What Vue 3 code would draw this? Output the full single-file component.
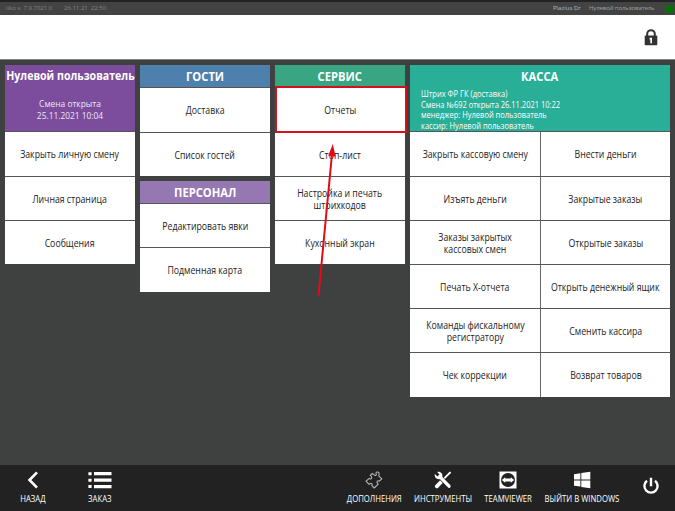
<script setup>
const personal = ['Закрыть личную смену', 'Личная страница', 'Сообщения']
const guests = ['Доставка', 'Список гостей']
const staff = ['Редактировать явки', 'Подменная карта']
const service = ['Отчеты', 'Стоп-лист', 'Настройка и печать\nштрихкодов', 'Кухонный экран']
const cash = [
  'Закрыть кассовую смену', 'Внести деньги',
  'Изъять деньги', 'Закрытые заказы',
  'Заказы закрытых\nкассовых смен', 'Открытые заказы',
  'Печать X-отчета', 'Открыть денежный ящик',
  'Команды фискальному\nрегистратору', 'Сменить кассира',
  'Чек коррекции', 'Возврат товаров',
]
const cashInfo = [
  'Штрих ФР ГК (доставка)',
  'Смена №692 открыта 26.11.2021 10:22',
  'менеджер: Нулевой пользователь',
  'кассир: Нулевой пользователь',
]
</script>

<template>
  <div class="screen">
    <header class="status">
      <span class="version">iiko v. 7.9.7021.0</span>
      <span class="clock">26.11.21&nbsp; 22:50</span>
      <span class="plugin">Plazius Dr</span>
      <span class="user">Нулевой пользователь</span>
      <i class="led"></i>
    </header>
    <div class="topbar">
      <svg class="lock" width="14" height="17" viewBox="0 0 14 17">
        <path d="M3.2 8V5a3.8 3.8 0 0 1 7.6 0v3" fill="none" stroke="#333" stroke-width="2" />
        <rect x=".7" y="6.6" width="12.6" height="9.6" rx=".8" fill="#333" />
        <path d="M5.6 8.8h2.4v5.4H6.3v-3.6h-.7z" fill="#fff" />
      </svg>
    </div>

    <main class="board">
      <section class="group">
        <div class="head tall purple">
          <h2 class="name"><span>Нулевой пользователь</span></h2>
          <p class="shift">Смена открыта<br>25.11.2021 10:04</p>
        </div>
        <button v-for="t in personal" :key="t" class="tile"><span>{{ t }}</span></button>
      </section>

      <div class="stack">
        <section class="group">
          <h2 class="head blue"><span>ГОСТИ</span></h2>
          <button v-for="t in guests" :key="t" class="tile"><span>{{ t }}</span></button>
        </section>
        <section class="group">
          <h2 class="head violet"><span>ПЕРСОНАЛ</span></h2>
          <button v-for="t in staff" :key="t" class="tile"><span>{{ t }}</span></button>
        </section>
      </div>

      <section class="group service">
        <h2 class="head green"><span>СЕРВИС</span></h2>
        <button v-for="t in service" :key="t" class="tile"><span>{{ t }}</span></button>
        <div class="highlight"></div>
        <svg class="arrow" width="24" height="156" viewBox="0 0 24 156">
          <path d="M3.5 151.5 17 10" stroke="#e30b17" stroke-width="2" fill="none" />
          <path d="M17.8 0 20.6 12.5 13.2 11.8Z" fill="#e30b17" />
        </svg>
      </section>

      <section class="group wide">
        <div class="head tall teal">
          <h2 class="title"><span>КАССА</span></h2>
          <div class="infos">
            <p v-for="l in cashInfo" :key="l">{{ l }}</p>
          </div>
        </div>
        <div class="pairs">
          <button v-for="t in cash" :key="t" class="tile"><span>{{ t }}</span></button>
        </div>
      </section>
    </main>

    <footer class="dock">
      <div class="cmd back">
        <svg width="18" height="18" viewBox="0 0 18 18"><path d="M13 1.3 5.5 9l7.5 7.7" fill="none" stroke="#fff" stroke-width="2.6" /></svg>
        <span>НАЗАД</span>
      </div>
      <div class="cmd order">
        <svg width="24" height="18" viewBox="0 0 24 18">
          <path d="M6 2.7h17.5M6 9.2h17.5M6 15.6h17.5" stroke="#fff" stroke-width="3.3" />
          <path d="M.4 2.7h3.2M.4 9.2h3.2M.4 15.6h3.2" stroke="#fff" stroke-width="3" />
        </svg>
        <span>ЗАКАЗ</span>
      </div>
      <div class="cmd addons">
        <svg width="18" height="18" viewBox="0 0 18 18">
          <path d="M1 10.2 4.2 7.3C5.5 9 7.8 7 6.2 5.2L5.2 4.3 7.3 2.3 9.5 4.2C11 5 11.8 3.7 11 2.6 10.7 1 13 .3 13.9 1.8 14.8 3.3 13.3 4.3 13.9 5.2L16.8 7.9 14.3 10.2C12.8 9 11.2 10.7 12.4 12.2L13.2 13.2 9.2 17 6.8 14.7C8 13 6.2 11.5 4.8 12.9L3.8 13.2Z" fill="none" stroke="#b5b5b5" stroke-width="1.1" stroke-linejoin="round" />
        </svg>
        <span>ДОПОЛНЕНИЯ</span>
      </div>
      <div class="cmd tools">
        <svg width="18" height="18" viewBox="0 0 18 18">
          <path d="M16 1.6 9 8.6" stroke="#fff" stroke-width="2" stroke-linecap="round" />
          <path d="M8.5 9.5 2.8 15.3" stroke="#fff" stroke-width="3.8" stroke-linecap="round" />
          <path d="M6 6 14.8 15" stroke="#222" stroke-width="4.6" />
          <path d="M5.7 5.7 15 15.2" stroke="#fff" stroke-width="3.3" stroke-linecap="round" />
          <path d="M3.2 .9C6.4 0 9.3 2.7 8.2 6.3L6.2 8C3 9 0 6.2.8 3L3.5 5.5 5.4 3.6Z" fill="#fff" />
        </svg>
        <span>ИНСТРУМЕНТЫ</span>
      </div>
      <div class="cmd viewer">
        <svg width="18" height="18" viewBox="0 0 18 18">
          <rect x=".5" y=".5" width="17" height="17" fill="#fff" />
          <circle cx="9" cy="9" r="7" fill="#222" />
          <path d="M2.8 9 6.2 6.3V7.6h5.6V6.3L15.2 9l-3.4 2.7v-1.3H6.2v1.3z" fill="#fff" />
        </svg>
        <span>TEAMVIEWER</span>
      </div>
      <div class="cmd windows">
        <svg width="18" height="18" viewBox="0 0 18 18">
          <path d="M1 3.2 7.4 2.3V8.5H1zM8.3 2.1 17.3.7v7.8h-9zM1 9.4h6.4v6.2L1 14.7zM8.3 9.4h9v7.9l-9-1.4z" fill="#fff" />
        </svg>
        <span>ВЫЙТИ В WINDOWS</span>
      </div>
      <div class="cmd power">
        <svg width="18" height="18" viewBox="0 0 18 18">
          <path d="M5 3.8a6.6 6.6 0 1 0 8 0M9 .8v8.4" fill="none" stroke="#fff" stroke-width="2.4" />
        </svg>
      </div>
    </footer>
  </div>
</template>

<style>
body { margin: 0; background: #3f4140; }
</style>

<style scoped>
.screen {
  width: 675px;
  height: 511px;
  display: flex;
  flex-direction: column;
  overflow: hidden;
  background: #3f4140;
  font-family: "Open Sans", "Noto Sans", sans-serif;
}
.status {
  height: 15px;
  box-sizing: border-box;
  border-top: 2px solid #222;
  background: #424342;
  display: flex;
  align-items: center;
  padding: 0 2px 0 6px;
  color: #858585;
  font-size: 6px;
  line-height: 13px;
  white-space: nowrap;
}
.version { width: 58px; }
.clock { flex: 1; }
.plugin { color: #bbb; width: 36px; }
.user { color: #a0a0a0; width: 76px; letter-spacing: -0.1px; }
.led { width: 8px; height: 8px; background: #087008; border-radius: 1px; }
.topbar {
  height: 45px;
  box-sizing: border-box;
  border-bottom: 1px solid #858585;
  background: #fff;
  display: flex;
  justify-content: flex-end;
  padding: 14px 17px 0 0;
}
.board {
  flex: 1;
  display: grid;
  grid-template-columns: 130px 130px 130px 260px;
  column-gap: 5px;
  align-items: start;
  padding: 5px 5px 0;
}
.stack { display: grid; row-gap: 5px; }
.group { display: flex; flex-direction: column; }
h2, p { margin: 0; }
.head {
  height: 22.4px;
  color: #fff;
  font-size: 13px;
  font-weight: 700;
  line-height: 22px;
  white-space: nowrap;
}
h2 {
  display: flex;
  justify-content: center;
}
h2 span { transform: scaleX(0.86); }
.tall { height: 66.4px; }
.name, .title { font-size: 13px; line-height: 22px; font-weight: 700; }
.name { font-size: 12.6px; }
.name span { transform: scaleX(0.84); }
.purple { background: #7c4d9c; }
.blue { background: #4e80ad; }
.violet { background: #9577b2; }
.green { background: #3aa582; }
.teal { background: #29ae97; }
.shift {
  font-size: 9.7px;
  font-weight: 400;
  line-height: 12.5px;
  padding-top: 10.6px;
  text-align: center;
  color: #f0e4f7;
  transform: scaleX(0.865);
}
.infos {
  font-size: 8.3px;
  font-weight: 400;
  line-height: 10.5px;
  padding: 2px 0 0 11px;
  transform: scaleX(0.905);
  transform-origin: 11px 0;
}
.tile {
  height: 44.2px;
  box-sizing: border-box;
  border: 0;
  border-top: 1px solid #555;
  background: #fff;
  margin: 0;
  padding: 1.4px 0 0;
  font: 400 10px/12.5px "Open Sans", "Noto Sans", sans-serif;
  color: #222;
  white-space: pre;
  display: flex;
  align-items: center;
  justify-content: center;
}
.tile span { transform: scaleX(0.873); }
.pairs { display: grid; grid-template-columns: 130px 130px; }
.pairs .tile:nth-child(even) { border-left: 1px solid #666; }
.service { position: relative; }
.highlight {
  position: absolute;
  left: 0;
  top: 21px;
  width: 132px;
  height: 47px;
  box-sizing: border-box;
  border: 2px solid #d3121d;
}
.arrow { position: absolute; left: 40px; top: 79px; }
.dock {
  height: 46px;
  background: #222;
  display: flex;
}
.cmd {
  flex: none;
  display: flex;
  flex-direction: column;
  align-items: center;
  padding-top: 6px;
  color: #fff;
  font-size: 9.1px;
  line-height: 12px;
  white-space: nowrap;
}
.cmd span { margin-top: 4px; transform: scaleX(0.85); }
.back { width: 66px; }
.order { width: 67px; }
.addons { width: 78px; margin-left: 202px; }
.tools { width: 60px; }
.viewer { width: 70px; }
.windows { width: 78px; }
.power { width: 60px; padding-top: 12px; }
</style>
